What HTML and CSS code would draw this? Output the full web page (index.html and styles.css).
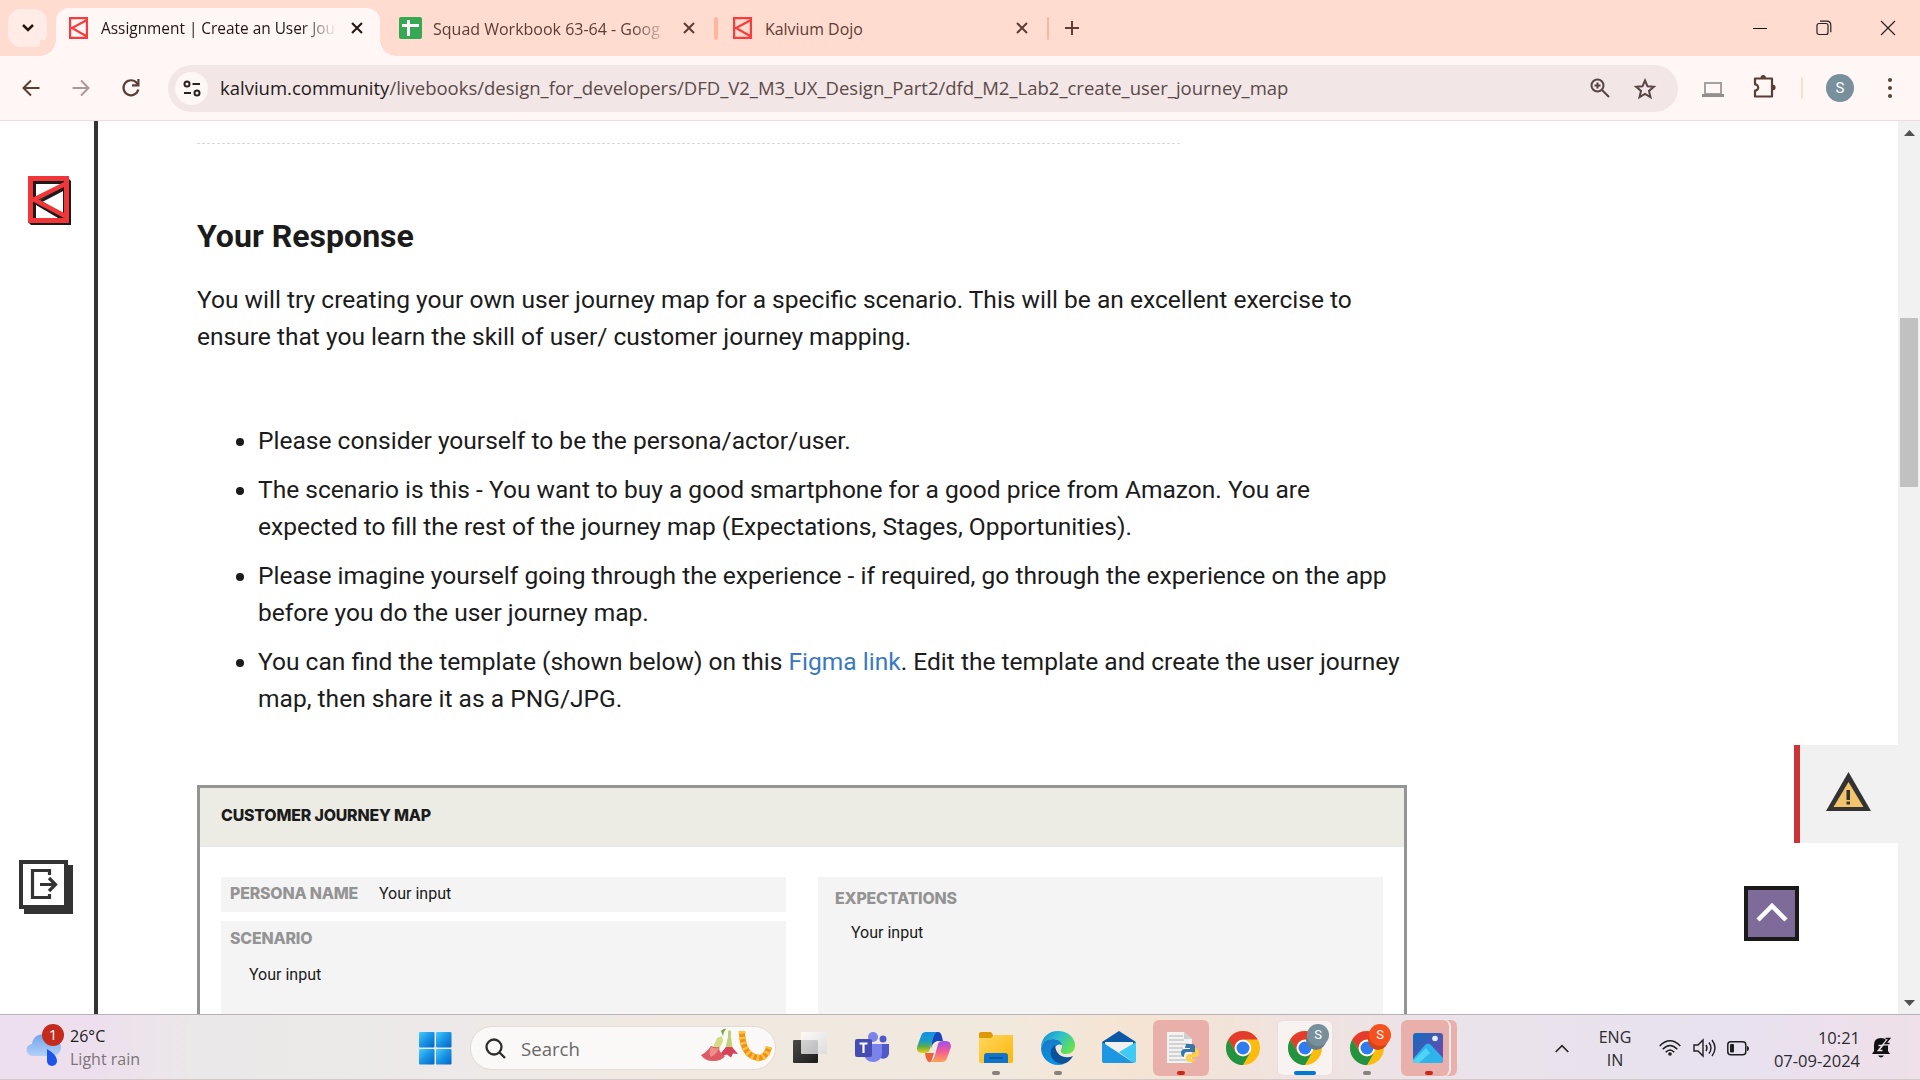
FILE: index.html
```html
<!DOCTYPE html>
<html lang="en">
<head>
<meta charset="utf-8">
<title>Assignment | Create an User Journey Map</title>
<link rel="stylesheet" href="styles.css">
</head>
<body>
<svg width="0" height="0" class="defs">
  <defs>
    <symbol id="kal" viewBox="0 0 19 22"><path fill="none" stroke="#f83b3d" stroke-width="2.2" d="M1.1 1.1h16.8v19.8H1.1zM18 3 3 11l15 8.500M2.200 11h1"/></symbol>
    <symbol id="x" viewBox="0 0 12 12"><path fill="none" stroke="currentColor" stroke-width="2" d="m1 1 10 10M11 1 1 11"/></symbol>
    <symbol id="chrome" viewBox="0 0 34 34">
      <circle cx="17" cy="17" r="17" fill="#fbbc10"/>
      <path fill="#e33b2e" d="M2.300 8.500A17 17 0 0 1 31.700 8.500H17a8.500 8.500 0 0 0-7.400 12.700z"/>
      <path fill="#229342" d="M2.300 8.500A17 17 0 0 0 17 34l7.360-12.750A8.500 8.500 0 0 1 9.640 21.250z"/>
      <circle cx="17" cy="17" r="8.300" fill="#fff"/><circle cx="17" cy="17" r="6.500" fill="#2f7cf0"/>
    </symbol>
    <linearGradient id="win" x2="1" y2="1"><stop stop-color="#46ccfb"/><stop offset=".5" stop-color="#1a92e3"/><stop offset="1" stop-color="#0067c8"/></linearGradient>
    <linearGradient id="cloud" x2="0" y2="1"><stop stop-color="#70a5ec"/><stop offset="1" stop-color="#b4cff7"/></linearGradient>
    <linearGradient id="fold" x2="1" y2="1"><stop stop-color="#ffd75e"/><stop offset="1" stop-color="#fbb70c"/></linearGradient>
    <linearGradient id="edgeA" x2="1" y2=".6"><stop stop-color="#1287cf"/><stop offset=".5" stop-color="#2cc0d0"/><stop offset="1" stop-color="#66e14e"/></linearGradient>
    <linearGradient id="edgeB" x2=".4" y2="1"><stop stop-color="#1b75c4"/><stop offset="1" stop-color="#0a93e3"/></linearGradient>
    <linearGradient id="copA" x2="0" y2="1"><stop stop-color="#1690e8"/><stop offset=".45" stop-color="#1c9dc0"/><stop offset=".7" stop-color="#5fae45"/><stop offset="1" stop-color="#f3cb12"/></linearGradient>
    <linearGradient id="copB" x2="0" y2="1"><stop stop-color="#a04df0"/><stop offset=".5" stop-color="#f05c95"/><stop offset="1" stop-color="#ffa254"/></linearGradient>
    <linearGradient id="ph" x2="1" y2="1"><stop stop-color="#0f6cc2"/><stop offset="1" stop-color="#7b45a8"/></linearGradient>
    <linearGradient id="dark" x2="1" y2="1"><stop stop-color="#4a4a4a"/><stop offset="1" stop-color="#1c1c1c"/></linearGradient>
    <linearGradient id="glass" x2="1" y2="1"><stop stop-color="#fff"/><stop offset="1" stop-color="#d9d9dc"/></linearGradient>
  </defs>
</svg>

<header class="tabstrip">
  <button class="tab-search"><svg width="14" height="10" viewBox="0 0 14 10"><path d="m2 2 5 5 5-5" fill="none" stroke="#241512" stroke-width="2.500"/></svg></button>
  <div class="tab active">
    <svg class="fav" width="19" height="22"><use href="#kal"/></svg>
    <span class="tab-title"><span class="ui t1">Assignment | Create an User Jou</span></span>
    <svg class="tab-x" width="12" height="12"><use href="#x"/></svg>
  </div>
  <div class="tab second">
    <svg width="23" height="22" viewBox="0 0 23 22"><rect width="23" height="22" rx="2" fill="#34a853"/><path d="M3 8.500h17M9.500 3v16" stroke="#fff" stroke-width="3"/></svg>
    <span class="tab-title"><span class="ui t2">Squad Workbook 63-64 - Goog</span></span>
    <svg class="tab-x" width="12" height="12"><use href="#x"/></svg>
  </div>
  <i class="sep wide"></i>
  <div class="tab third">
    <svg width="19" height="22"><use href="#kal"/></svg>
    <span class="tab-title plain"><span class="ui t3">Kalvium Dojo</span></span>
    <svg class="tab-x" width="12" height="12"><use href="#x"/></svg>
  </div>
  <i class="sep"></i>
  <svg class="plus" width="16" height="16" viewBox="0 0 16 16"><path d="M8 1v14M1 8h14" stroke="#5b3d35" stroke-width="2"/></svg>
  <div class="win-controls">
    <svg width="14" height="14" viewBox="0 0 14 14"><path d="M0 7.500h14" stroke="#111"/></svg>
    <svg width="16" height="16" viewBox="0 0 16 16" fill="none" stroke="#222" stroke-width="1.200"><rect x="1" y="3.500" width="11" height="11" rx="2"/><path d="M4 1.200h7a4 4 0 0 1 3.800 4v7"/></svg>
    <svg width="14" height="14" viewBox="0 0 14 14"><path d="m0 0 14 14M14 0 0 14" stroke="#222" stroke-width="1.200"/></svg>
  </div>
</header>

<nav class="toolbar">
  <svg class="back" width="18" height="18" viewBox="0 0 18 18"><path d="M17.500 9H2M9 1.500 1.500 9 9 16.500" fill="none" stroke="#5b3d35" stroke-width="2"/></svg>
  <svg class="fwd" width="18" height="18" viewBox="0 0 18 18"><path d="M.5 9H16M9 1.500 16.500 9 9 16.500" fill="none" stroke="#aa9a97" stroke-width="2"/></svg>
  <svg class="reload" width="18" height="18" viewBox="0 0 18 18"><path d="M16.300 10.500A7.500 7.500 0 1 1 14.800 4l1.500 2" fill="none" stroke="#5b3d35" stroke-width="2.200"/><path d="M17.500 0v7.500H10V5.300h5.300V0z" fill="#5b3d35"/></svg>
  <div class="omnibox">
    <span class="site"><svg width="18" height="17" viewBox="0 0 18 17" fill="none" stroke="#2b2020" stroke-width="2"><circle cx="4" cy="4" r="2.500"/><path d="M9.500 4H17M1 13h7"/><circle cx="14" cy="13" r="2.500"/></svg></span>
    <span class="ui url"><b>kalvium.community</b>/livebooks/design_for_developers/DFD_V2_M3_UX_Design_Part2/dfd_M2_Lab2_create_user_journey_map</span>
    <svg class="mag" width="20" height="20" viewBox="0 0 20 20" fill="none" stroke="#574543" stroke-width="2"><circle cx="7.500" cy="7.500" r="6"/><path d="m12 12 7 7M4.500 7.500h6M7.500 4.500v6"/></svg>
    <svg class="star" width="22" height="21" viewBox="0 0 22 21"><path d="m11 2.500 2.500 5.800 6.300.5-4.800 4.100 1.500 6.200L11 15.800 5.500 19.100 7 12.900 2.200 8.800l6.300-.5z" fill="none" stroke="#574543" stroke-width="2"/></svg>
  </div>
  <svg class="laptop" width="22" height="16" viewBox="0 0 22 16"><path d="M3 1h16v11H3z" fill="none" stroke="#a3a09f" stroke-width="2"/><path d="M0 12h22v3H0z" fill="#928e8d"/></svg>
  <svg class="puzzle" width="24" height="24" viewBox="0 0 24 24"><path d="M2 4.500H19V22.500H2v-5.800a3.200 3.200 0 0 0 0-6.400z" fill="none" stroke="#5b3d35" stroke-width="2.200" stroke-linejoin="round"/><path d="M7.500 4a2.700 3 0 0 1 5.400 0zM20 10.800a2.600 2.700 0 0 1 0 5.400z" fill="#5b3d35"/></svg>
  <i class="tsep"></i>
  <span class="avatar">S</span>
  <svg class="dots" width="4" height="20" viewBox="0 0 4 20" fill="#5b3d35"><circle cx="2" cy="2" r="2"/><circle cx="2" cy="10" r="2"/><circle cx="2" cy="18" r="2"/></svg>
</nav>

<div class="page">
  <aside class="side">
    <svg class="logo" width="43" height="49" viewBox="0 0 43 49">
      <path d="M3 3h38l2 2v44H3l-3-3z" fill="#1c1a1b"/>
      <path d="M8 8h27L8 21zM12 24l23-11v25zM8 29l22 13H8z" fill="#fff"/>
      <path d="M6.500 21V6.500h27M13 25l23-12M6.500 42V28" fill="none" stroke="#1c1a1b" stroke-width="3"/>
      <path d="M2.500 2.500h36v42h-36z" fill="none" stroke="#f03638" stroke-width="5"/>
      <path d="M38 7.500 6 23.500l32 17" fill="none" stroke="#f03638" stroke-width="4.500"/>
    </svg>
    <svg class="exit" width="54" height="54" viewBox="0 0 54 54"><path d="M5 5h49v49H5z" fill="#333"/><path d="M2 2h45v45H2z" fill="#fff" stroke="#333" stroke-width="4"/><path d="M30.500 15v-4.500h-17v27h17V34M21 24.500h16M30 18l6.500 6.500L30 31" fill="none" stroke="#333" stroke-width="3.200"/></svg>
  </aside>
  <main class="doc">
    <hr class="dash">
    <h2>Your Response</h2>
    <p>You will try creating your own user journey map for a specific scenario. This will be an excellent exercise to<br>ensure that you learn the skill of user/ customer journey mapping.</p>
    <ul>
      <li>Please consider yourself to be the persona/actor/user.</li>
      <li>The scenario is this - You want to buy a good smartphone for a good price from Amazon. You are<br>expected to fill the rest of the journey map (Expectations, Stages, Opportunities).</li>
      <li>Please imagine yourself going through the experience - if required, go through the experience on the app<br>before you do the user journey map.</li>
      <li>You can find the template (shown below) on this <a>Figma link</a>. Edit the template and create the user journey<br>map, then share it as a PNG/JPG.</li>
    </ul>
    <section class="map">
      <div class="map-head"><span class="lab">CUSTOMER JOURNEY MAP</span></div>
      <div class="map-body">
        <div class="col">
          <div class="cell persona"><span class="lab">PERSONA NAME</span><span class="inp">Your input</span></div>
          <div class="cell scenario"><span class="lab">SCENARIO</span><span class="inp">Your input</span></div>
        </div>
        <div class="cell expect"><span class="lab">EXPECTATIONS</span><span class="inp">Your input</span></div>
      </div>
    </section>
  </main>
  <div class="right">
    <div class="warn"><svg width="45" height="39" viewBox="0 0 45 39"><path d="M22.500 0 45 39H0z" fill="#333"/><path d="M22.500 10 37.500 35h-30z" fill="#f2c46c"/><path d="M20.500 18h3.500v10h-3.500zM20.500 29.500h3.500v3h-3.500z" fill="#333"/></svg></div>
    <div class="up"><svg width="32" height="20" viewBox="0 0 32 20"><path d="m2 17 14-14 14 14" fill="none" stroke="#fff" stroke-width="4.500"/></svg></div>
  </div>
  <div class="scroll">
    <svg width="11" height="6" viewBox="0 0 11 6"><path d="M5.500 0 11 6H0z" fill="#505050"/></svg>
    <i class="thumb"></i>
    <svg class="down" width="11" height="6" viewBox="0 0 11 6"><path d="M5.500 6 11 0H0z" fill="#505050"/></svg>
  </div>
</div>

<footer class="taskbar">
  <div class="weather">
    <svg width="40" height="44" viewBox="0 0 40 44"><path d="M8 33a6 6 0 0 1-1-12 11 11 0 0 1 20-5 8 8 0 0 1 1 17z" fill="url(#cloud)"/><path d="M22 26c5 3 10 7 10 12a5 5 0 0 1-10 0z" fill="#1d55ea"/><circle cx="28" cy="12" r="11" fill="#c42b1c"/><text x="28" y="17" text-anchor="middle" class="num">1</text></svg>
    <div class="wtext"><span class="ui">26°C</span><span class="ui w2">Light rain</span></div>
  </div>
  <svg class="start" width="33" height="33" viewBox="0 0 33 33" fill="url(#win)"><rect width="15.500" height="15.500" rx="1"/><rect x="17" width="15.500" height="15.500" rx="1"/><rect y="17" width="15.500" height="15.500" rx="1"/><rect x="17" y="17" width="15.500" height="15.500" rx="1"/></svg>
  <div class="search">
    <svg width="21" height="21" viewBox="0 0 21 21" fill="none" stroke="#2d2d2d" stroke-width="2.300"><circle cx="9" cy="9" r="7.500"/><path d="m14 14 6 6"/></svg>
    <span class="ui s1">Search</span>
    <svg class="flowers" width="71" height="34" viewBox="0 0 71 34">
      <path d="M20 2q3-3 5-2-3 3-3 7z" fill="#78a83b"/><path d="M16 9l5-2 1 5-6 13-6-2z" fill="#d4dc83"/><path d="M0 26q5-2 10-9 4 2 8 1 0 6 6 9-3 5-12 5Q4 32 0 26z" fill="#df5a66"/><path d="M10 18q4 2 8 1-2 6-8 9-3-4 0-10z" fill="#eb8f87"/>
      <path d="M27 8V2q4-3 3 6l2 13h-8z" fill="#bfd077"/><path d="M20 24l5-6h6l6 7-5-.5-2 4-4-3-4 1z" fill="#d34458"/>
      <path d="M41 2q0 25 17 27 7 0 10-11" fill="none" stroke="#ef8e18" stroke-width="6"/><path d="M41 2q0 25 17 27 7 0 10-11" fill="none" stroke="#ffc23e" stroke-width="7" stroke-dasharray="2.500 3"/>
    </svg>
  </div>
  <div class="apps">
    <div class="app"><svg width="34" height="34" viewBox="0 0 34 34"><rect y="9" width="25" height="23" rx="1" fill="url(#dark)"/><rect x="8" y="1" width="26" height="22" rx="1" fill="url(#glass)" opacity=".8"/></svg></div>
    <div class="app"><svg width="34" height="34" viewBox="0 0 34 34"><circle cx="18" cy="6" r="5" fill="#7b83eb"/><circle cx="28" cy="8" r="3.500" fill="#5059c9"/><path d="M24 13h10v9a6 6 0 0 1-9 5z" fill="#5059c9"/><path d="M9 13h18v10a9 8 0 0 1-18 0z" fill="#7b83eb"/><rect y="8" width="17" height="18" rx="2" fill="#454db3"/><path d="M4.500 12.500h8M8.500 12v10" stroke="#fff" stroke-width="2.200"/></svg></div>
    <div class="app"><svg width="34" height="34" viewBox="0 0 34 34"><path d="M16 1h5q3 0 4 5l1 4h-6q-5 2-6 8z" fill="#1745bf"/><path d="M9 1h11q-3 2-4 7l-3 10q-1 4-5 4H4q-5-1-4-6L4 5q1-4 5-4z" fill="url(#copA)"/><path d="M25 31H13q4-2 5-7l3-11q1-3 5-3h3q5 0 5 6l-4 11q-1 4-5 4z" fill="url(#copB)"/><path d="M8 22h9l-2 6q-1 4-3 3-3-1-4-9z" fill="#ee6035"/></svg></div>
    <div class="app run"><svg width="34" height="34" viewBox="0 0 34 34"><path d="M0 3q0-2 2-2h10l2 3v5H0z" fill="#dd9a05"/><path d="M0 7h12l3-3h19v26q0 2-2 2H2q-2 0-2-2z" fill="url(#fold)"/><path d="M5 32v-7q0-3 3-3h18q3 0 3 3v7z" fill="#0f75cb"/><path d="M10 27h14" stroke="#0a4f98" stroke-width="1.500"/></svg></div>
    <div class="app run"><svg width="34" height="34" viewBox="0 0 34 34"><path d="M0 17C0 6 8 0 17 0s17 6 17 14c0 6-4 9-9 9-4 0-6-2-5-4 3-5-1-11-8-11C7 8 2 12 0 17z" fill="url(#edgeA)"/><path d="M0 17C2 11 6 8 12 8c6 0 9 4 9 6-4-2-8 1-8 7 0 6 5 11 10 12-11 4-23-4-23-16z" fill="url(#edgeB)"/><path d="M14 14c-9 6-3 19 8 19 4-1 8-4 10-8-7 3-17 1-18-11z" fill="#0d5299"/></svg></div>
    <div class="app"><svg width="34" height="34" viewBox="0 0 34 34"><path d="M0 11 17 0l17 11v8H0z" fill="#0b58a6"/><path d="M3 11h28v10H3z" fill="#f1f1f1"/><path d="M34 11v19q0 2-2 2L17 21z" fill="#3fcaf4"/><path d="M0 11l32 21H2q-2 0-2-2z" fill="#1d97e2"/></svg></div>
    <div class="app alert"><svg width="34" height="34" viewBox="0 0 34 34"><path d="M3 1h17l8 7v24H3z" fill="#f2f2f2"/><path d="M5 5h14M5 9h15M5 13h20M5 17h14M5 21h12M5 25h14M5 29h20" stroke="#c7c7c7" stroke-width="1.300"/><path d="M20 1v7h8z" fill="#cfcfcf"/><path d="M22 13h6q3 0 3 3v5h-8q-3 0-3 5-3-1-3-4 0-4 4-4h5v-1h-5z" fill="#3876aa"/><path d="M31 17q4 0 4 5 0 4-4 4h-4v2h5q-1 3-5 3-5 0-5-4 0-4 4-4h5z" fill="#ffd141"/></svg></div>
    <div class="app"><svg width="34" height="34"><use href="#chrome"/></svg></div>
    <div class="app current"><svg width="34" height="34"><use href="#chrome"/></svg><span class="badge">S</span></div>
    <div class="app run"><svg width="34" height="34"><use href="#chrome"/></svg><span class="badge orange">S</span></div>
    <div class="app alert stacked"><svg width="32" height="32" viewBox="0 0 32 32"><rect x="1" y="1" width="30" height="30" rx="3" fill="url(#ph)"/><path d="M1 27 13 13q3-3 6 0l12 13v2q0 3-3 3H4q-3 0-3-3z" fill="#2db4ed"/><path d="M1 29 14 16l4 5-11 10H4q-3 0-3-2z" fill="#4fd3f7"/><circle cx="23" cy="6.500" r="2.800" fill="#e8ecfb"/></svg></div>
  </div>
  <div class="tray">
    <svg class="chev" width="14" height="9" viewBox="0 0 14 9"><path d="m.7 8 6.300-6.300L13.300 8" fill="none" stroke="#222" stroke-width="1.600"/></svg>
    <div class="lang ui"><span>ENG</span><span>IN</span></div>
    <svg class="wifi" width="22" height="18" viewBox="0 0 22 18" fill="none" stroke="#1f1f1f" stroke-width="1.500"><path d="M.7 7q10.300-10.500 20.600 0M3.700 10.200q7.300-7.500 14.600 0M6.700 13.200q4.300-4.600 8.600 0"/><circle cx="11" cy="15" r="1.800" fill="#1f1f1f" stroke="none"/></svg>
    <svg class="vol" width="23" height="20" viewBox="0 0 23 20" fill="none" stroke="#1f1f1f" stroke-width="1.400"><path d="M1 7h4l5-5v16l-5-5H1zM13 7q2 3 0 6M16 4.500q4 5.500 0 11M19 2q6 8 0 16"/></svg>
    <svg class="bat" width="22" height="15" viewBox="0 0 22 15"><rect x=".8" y=".8" width="18" height="13" rx="3" fill="none" stroke="#1f1f1f" stroke-width="1.500"/><rect x="3" y="3" width="4" height="8.500" rx="1" fill="#1f1f1f"/><path d="M20 5q2 0 2 2.500T20 10z" fill="#1f1f1f"/></svg>
    <div class="clock ui"><span>10:21</span><span>07-09-2024</span></div>
    <svg class="bell" width="20" height="22" viewBox="0 0 20 22"><path d="M0 17l2-3V8q0-7 7-7t7 7v6l2 3zM6 18.500h6q-3 4-6 0z" fill="#111"/><path d="M6.500 8.500h4l-4 5h4" fill="none" stroke="#eee0ea" stroke-width="1.600"/><path d="M13.500 1.500h4l-4 5h4" fill="none" stroke="#eee0ea" stroke-width="4"/><path d="M13.500 1.500h4l-4 5h4" fill="none" stroke="#111" stroke-width="1.600"/></svg>
  </div>
</footer>
</body>
</html>
```
FILE: styles.css
```css
* { box-sizing: border-box; }
body { margin: 0; width: 1920px; height: 1080px; overflow: hidden; background: #fff; font-family: Roboto, "Liberation Sans", sans-serif; color: #1b1b1b; display: flex; flex-direction: column; }
svg { display: block; flex: none; overflow: visible; }
i { display: block; flex: none; }
.defs { position: absolute; }
.ui { font-family: "Open Sans", "Noto Sans", sans-serif; white-space: nowrap; }

.tabstrip { height: 56px; flex: none; background: #ffdbd0; display: flex; align-items: center; padding-left: 8px; }
.tab-search { width: 39px; height: 38px; border: 0; border-radius: 13px; background: #ffece6; display: flex; align-items: center; justify-content: center; padding: 0; margin-right: 9px; flex: none; }
.tab { display: flex; align-items: center; height: 48px; flex: none; color: #5b3d35; }
.tab.active { position: relative; align-self: flex-end; width: 324px; padding: 0 17px 8px 13px; background: #fff7f5; border-radius: 13px 13px 0 0; color: #241512; }
.tab.active::before, .tab.active::after { content: ""; position: absolute; bottom: 0; width: 16px; height: 16px; }
.tab.active::before { left: -16px; background: radial-gradient(circle at 0 0, #ffdbd0 15.500px, #fff7f5 16px); }
.tab.active::after { right: -16px; background: radial-gradient(circle at 100% 0, #ffdbd0 15.500px, #fff7f5 16px); }
.tab-title { font-size: 15.400px; line-height: 24px; margin: 2px 0 0 13px; width: 238px; white-space: nowrap; -webkit-mask-image: linear-gradient(90deg, #000 200px, transparent 236px); mask-image: linear-gradient(90deg, #000 200px, transparent 236px); }
.tab-title.plain { -webkit-mask-image: none; mask-image: none; }
.tab-x { margin-left: auto; }
.tab.second { width: 296px; margin-left: 19px; }
.tab.second .tab-title { margin-left: 11px; font-size: 16px; }
.tab.third { width: 295px; margin-left: 15px; }
.tab.third .tab-title { font-size: 15.900px; }
.sep { width: 2px; height: 23px; background: #ffb69f; border-radius: 2px; margin-left: 19px; }
.sep.wide { width: 4px; }
.plus { margin-left: 15px; }
.win-controls { margin-left: auto; display: flex; align-items: center; gap: 49px; padding-right: 25px; }

.toolbar { height: 65px; flex: none; background: #fff7f5; border-bottom: 1px solid #f3dcd5; display: flex; align-items: center; padding-left: 22px; }
.fwd { margin-left: 32px; }
.reload { margin-left: 32px; }
.omnibox { margin-left: 28px; width: 1510px; height: 47px; border-radius: 24px; background: #f2e6e6; display: flex; align-items: center; padding-left: 7px; flex: none; }
.site { width: 33px; height: 33px; border-radius: 50%; background: #fff7f5; display: flex; align-items: center; justify-content: center; }
.url { font-size: 18.500px; margin-left: 12px; padding-bottom: 1px; color: #5a4a49; width: 1068px; }
.url b { font-weight: 400; color: #241a1a; }
.mag { margin-left: 302px; }
.star { margin-left: 24px; }
.laptop { margin: 4px 0 0 24px; }
.puzzle { margin-left: 29px; margin-top: -4px; }
.tsep { width: 2px; height: 22px; background: #ffdbd0; margin-left: 24px; }
.avatar { width: 28px; height: 28px; border-radius: 50%; background: #78909c; color: #fff; font-size: 15px; line-height: 28px; text-align: center; margin-left: 23px; }
.dots { margin-left: 34px; }

.page { flex: 1; min-height: 0; display: flex; overflow: hidden; }
.side { width: 98px; flex: none; border-right: 4px solid #333; display: flex; flex-direction: column; justify-content: space-between; padding: 55px 0 100px; }
.logo { margin-left: 28px; }
.exit { margin-left: 19px; }
.doc { width: 1309px; flex: none; padding-left: 99px; font-size: 24.550px; line-height: 36.800px; }
.dash { margin: 22px 0 0; width: 983px; border: 0; height: 1px; background: repeating-linear-gradient(90deg, #d9d9d9 0 3px, transparent 3px 5px); }
h2 { font-size: 32.100px; line-height: 40px; margin: 72px 0 0; font-weight: 700; }
p { margin: 26px 0 0; white-space: nowrap; }
ul { margin: 67.400px 0 0; padding: 0 0 0 61px; list-style: none; white-space: nowrap; }
li { position: relative; margin-bottom: 12.270px; }
li::before { content: ""; position: absolute; left: -22px; top: 15px; width: 8px; height: 8px; border-radius: 50%; background: #1b1b1b; }
li a { color: #3a78c3; }
.map { margin-top: 67.400px; width: 1210px; height: 400px; border: 3px solid #949494; font-size: 16px; line-height: 20px; }
.map-head { height: 59px; background: #ecece4; border-bottom: 2px solid #e9e9e9; padding: 18px 21px; }
.map-body { display: flex; gap: 32px; padding: 30px 21px 0; }
.col { width: 565px; }
.lab { font-family: Inter, sans-serif; font-weight: 800; font-size: 15.900px; letter-spacing: -0.180px; color: #949494; white-space: nowrap; }
.map-head .lab { color: #1b1b1b; }
.inp { color: #1b1b1b; white-space: nowrap; }
.cell { background: #f4f4f4; }
.persona { height: 35px; display: flex; padding: 7px 9px 0 9px; }
.persona .lab { width: 128px; }
.persona .inp { margin-left: 21px; }
.scenario { margin-top: 9px; height: 200px; padding: 8px 9px; display: flex; flex-direction: column; align-items: flex-start; gap: 16px; }
.scenario .inp { margin-left: 19px; }
.expect { width: 565px; height: 300px; padding: 12px 17px; display: flex; flex-direction: column; align-items: flex-start; gap: 14px; }
.expect .inp { margin-left: 16px; }

.right { flex: 1; display: flex; flex-direction: column; align-items: flex-end; padding-top: 624px; }
.warn { width: 104px; height: 98px; background: #f1f1f1; border-left: 6px solid #cc3336; display: flex; padding: 27px 0 0 26px; }
.up { width: 55px; height: 55px; margin: 43px 99px 0 0; border: 4px solid #1a1a1a; background: #7e6b99; display: flex; justify-content: center; padding-top: 13px; }
.scroll { width: 22px; background: #f1f1f1; display: flex; flex-direction: column; align-items: center; padding: 9px 0 8px; flex: none; }
.thumb { width: 18px; height: 169px; background: #c1c1c1; margin-top: 182px; }
.down { margin-top: auto; }

.taskbar { height: 66px; flex: none; padding-top: 2px; border-top: 1px solid #b8b2b6; border-bottom: 1px solid #d3c9c8; display: flex; align-items: center; background: linear-gradient(90deg, #eedff0 0, #eddfed 5%, #ebe8e9 10%, #ece9e8 24%, #f0e9e0 35%, #f1e9de 52%, #f5e4d3 59%, #f1e3dd 66%, #ebe3ea 75%, #e8e2ee 86%, #e8e1f0 90%, #efe0e9 100%); }
.weather { display: flex; width: 419px; padding: 0 0 2px 25px; flex: none; }
.num { font: 15px "Open Sans", sans-serif; fill: #fff; }
.wtext { display: flex; flex-direction: column; margin: 2px 0 0 5px; font-size: 16px; line-height: 23px; }
.wtext .ui { align-self: flex-start; }
.w2 { color: #7c7579; }
.search { width: 306px; height: 44px; margin-left: 18px; border-radius: 22px; background: #fbf9f7; border: 1px solid #e2dbd5; display: flex; align-items: center; padding-left: 14px; flex: none; }
.s1 { font-size: 18.600px; color: #6a6867; margin-left: 15px; width: 60px; }
.flowers { margin: -4px 0 0 120px; }
.apps { display: flex; margin-left: 6px; gap: 5.900px; }
.app { position: relative; width: 56px; height: 56px; border-radius: 6px; display: flex; align-items: center; justify-content: center; }
.run::after, .alert::after, .current::after { content: ""; position: absolute; bottom: 1px; left: 24px; width: 8px; height: 4px; border-radius: 2px; background: #87817e; }
.alert { background: #e8afab; }
.alert::after { background: #c42b1c; }
.current { background: #f8f2f1; border: 1px solid #eadfe0; }
.current::after { left: 16px; width: 22px; background: #0078d4; bottom: 0; }
.badge { position: absolute; left: 30px; top: 4px; width: 22px; height: 22px; border-radius: 50%; background: #78909c; color: #fff; font-size: 13px; line-height: 22px; text-align: center; box-shadow: -2px 5px 0 -1px #667d89; }
.current .badge { left: 29px; top: 3px; }
.badge.orange { background: #f4511e; box-shadow: -2px 5px 0 -1px #d3431a; }
.stacked { width: 48px; padding-left: 7px; margin-right: 8px; box-shadow: 2px 0 0 #f9eded, 8px 0 0 #e8afab; }
.tray { display: flex; align-items: center; margin-left: auto; padding-right: 28px; }
.lang, .clock { display: flex; flex-direction: column; font-size: 16px; line-height: 23px; color: #2c2b2d; margin-top: 1px; }
.lang { align-items: center; width: 34px; margin-left: 29px; }
.wifi { margin-left: 27px; }
.vol { margin-left: 12px; }
.bat { margin-left: 11px; }
.clock { align-items: flex-end; width: 88px; margin-left: 23px; font-size: 16.500px; }
.bell { margin-left: 12px; }
```
